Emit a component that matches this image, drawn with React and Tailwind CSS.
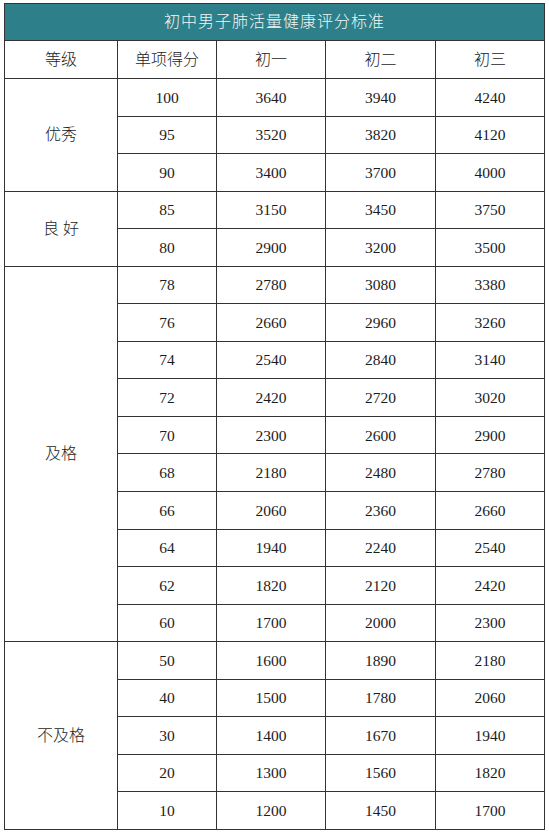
const groups = [
  {
    level: '优秀',
    rows: [
      [100, 3640, 3940, 4240],
      [95, 3520, 3820, 4120],
      [90, 3400, 3700, 4000],
    ],
  },
  {
    level: '良 好',
    rows: [
      [85, 3150, 3450, 3750],
      [80, 2900, 3200, 3500],
    ],
  },
  {
    level: '及格',
    rows: [
      [78, 2780, 3080, 3380],
      [76, 2660, 2960, 3260],
      [74, 2540, 2840, 3140],
      [72, 2420, 2720, 3020],
      [70, 2300, 2600, 2900],
      [68, 2180, 2480, 2780],
      [66, 2060, 2360, 2660],
      [64, 1940, 2240, 2540],
      [62, 1820, 2120, 2420],
      [60, 1700, 2000, 2300],
    ],
  },
  {
    level: '不及格',
    rows: [
      [50, 1600, 1890, 2180],
      [40, 1500, 1780, 2060],
      [30, 1400, 1670, 1940],
      [20, 1300, 1560, 1820],
      [10, 1200, 1450, 1700],
    ],
  },
];

const cell = 'border-[1.5px] border-[#333] text-center align-middle p-0';

export default function App() {
  return (
    <div
      className="w-[549px] h-[834px] bg-white pt-[3px] pl-[4px] text-[15.5px] text-[#1c1c1c]"
      style={{ fontFamily: '"Liberation Serif", "Noto Sans CJK SC", serif' }}
    >
      <table className="w-[540px] border-collapse table-fixed">
        <colgroup>
          <col className="w-[113px]" />
          <col className="w-[99px]" />
          <col className="w-[109px]" />
          <col className="w-[110px]" />
          <col className="w-[109px]" />
        </colgroup>
        <thead>
          <tr className="h-[37px]">
            <th
              colSpan={5}
              className="border-[1.5px] border-[#333] bg-[#2d8089] text-center font-light tracking-[1px] text-[#f2f6f6] text-[16px]"
            >
              初中男子肺活量健康评分标准
            </th>
          </tr>
          <tr className="h-[38px]">
            {['等级', '单项得分', '初一', '初二', '初三'].map((h) => (
              <th key={h} className={`${cell} font-light text-[16px]`}>
                {h}
              </th>
            ))}
          </tr>
        </thead>
        <tbody>
          {groups.map((g) =>
            g.rows.map((r, i) => (
              <tr key={`${g.level}-${r[0]}`} className="h-[37.55px]">
                {i === 0 && (
                  <td rowSpan={g.rows.length} className={`${cell} font-light text-[16px]`}>
                    {g.level}
                  </td>
                )}
                {r.map((v, j) => (
                  <td key={j} className={cell}>
                    {v}
                  </td>
                ))}
              </tr>
            ))
          )}
        </tbody>
      </table>
    </div>
  );
}
